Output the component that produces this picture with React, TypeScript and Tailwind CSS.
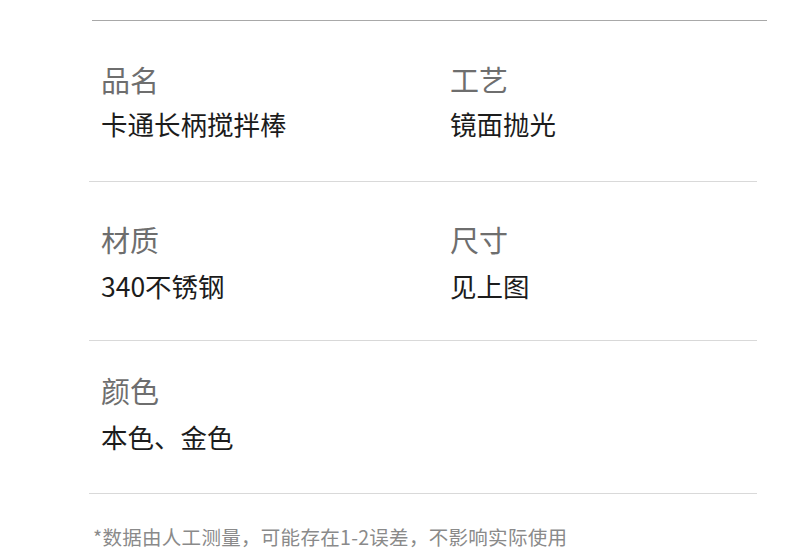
const rows = [
  {
    pt: "pt-[40px]",
    gap: "gap-[10px]",
    h: "h-[161px]",
    items: [
      { label: "品名", value: "卡通长柄搅拌棒" },
      { label: "工艺", value: "镜面抛光" },
    ],
  },
  {
    pt: "pt-[39px]",
    gap: "gap-[12px]",
    h: "h-[159px]",
    items: [
      { label: "材质", value: "340不锈钢" },
      { label: "尺寸", value: "见上图" },
    ],
  },
  {
    pt: "pt-[31px]",
    gap: "gap-[12px]",
    h: "h-[153px]",
    items: [{ label: "颜色", value: "本色、金色" }],
  },
];

export default function App() {
  return (
    <div className="h-[550px] w-[800px] overflow-hidden bg-white font-['Noto_Sans_CJK_SC',sans-serif]">
      <div className="pt-[20px]">
        <div className="ml-[92px] h-px w-[675px] bg-[#a8a8a8]" />
      </div>

      <div className="ml-[89px] w-[668px]">
        {rows.map((row, i) => (
          <div
            key={i}
            className={`grid grid-cols-[349px_1fr] border-b border-[#d9d9d9] pl-[12px] ${row.pt} ${row.h}`}
          >
            {row.items.map((item) => (
              <div key={item.label} className={`flex flex-col ${row.gap}`}>
                <p className="text-[29px] leading-[36px] text-[#6e6e6e]">{item.label}</p>
                <p className="text-[26.5px] leading-[34px] text-[#1c1c1c]">{item.value}</p>
              </div>
            ))}
          </div>
        ))}
      </div>

      <p className="ml-[93px] mt-[29px] text-[19.5px] leading-[28px] tracking-[0.3px] text-[#8a8a8a]">
        *数据由人工测量，可能存在1-2误差，不影响实际使用
      </p>
    </div>
  );
}
